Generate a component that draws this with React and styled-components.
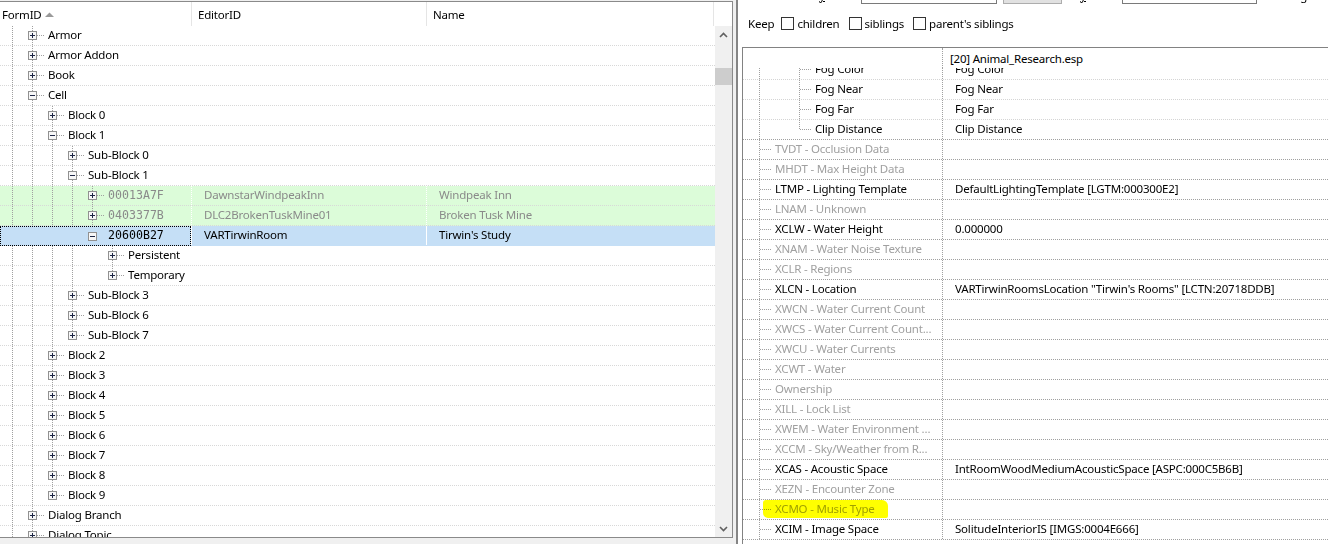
import React from 'react';
import styled, { createGlobalStyle, css } from 'styled-components';

const FONT = `"Noto Sans", "Open Sans", sans-serif`;
const MONO = `"DejaVu Sans Mono", "Liberation Mono", monospace`;
const TREE_LINE = '#a0a0a0';

const vDots = (c) => `repeating-linear-gradient(to bottom, ${c} 0 1px, transparent 1px 2px)`;
const hDots = (c) => `repeating-linear-gradient(to right, ${c} 0 1px, transparent 1px 2px)`;

const GlobalStyle = createGlobalStyle`
  html, body { margin: 0; padding: 0; }
  body {
    background: #f0f0f0;
    font-family: ${FONT};
    font-size: 11.5px;
    letter-spacing: -0.2px;
    color: #000;
    overflow: hidden;
  }
  #root { width: 1328px; height: 544px; }
`;

const Screen = styled.div`
  display: flex;
  width: 1328px;
  height: 544px;
  overflow: hidden;
`;

/* ---------- left grid ---------- */
const LeftPane = styled.section`
  flex: 0 0 733px;
  box-sizing: border-box;
  padding-top: 1px;
  background: #f0f0f0;
`;

const GridFrame = styled.div`
  height: 537px;
  box-sizing: border-box;
  background: #fff;
  border: 1px solid #8a8a8a;
  border-left: none;
  display: flex;
  flex-direction: column;
`;

const GridHead = styled.div`
  display: flex;
  flex: none;
  height: 24px;
`;

const HeadCell = styled.div`
  flex: ${(p) => (p.$w ? `0 0 ${p.$w}px` : '1 1 auto')};
  box-sizing: border-box;
  display: flex;
  align-items: center;
  gap: 3px;
  padding-left: ${(p) => p.$pad}px;
  white-space: nowrap;
  ${(p) => p.$divider && css`border-left: 1px solid #e5e5e5;`}
`;

const GridBody = styled.div`
  flex: 1;
  min-height: 0;
  display: flex;
`;

const RowsPane = styled.div`
  flex: 1;
  overflow: hidden;
`;

const tones = { plain: '#fff', green: '#dcfcd9', sel: '#c5dff6' };

const GridRow = styled.div`
  display: flex;
  height: 20px;
  box-sizing: border-box;
  border-bottom: 1px dotted ${(p) => (p.$tone === 'sel' ? 'transparent' : '#d8d8d8')};
  background: ${(p) => tones[p.$tone]};
  color: ${(p) => (p.$tone === 'green' ? '#8a8a8a' : '#000')};
`;

const KeyCell = styled.div`
  flex: 0 0 191px;
  box-sizing: border-box;
  display: flex;
  padding-left: 2px;
  overflow: hidden;
  ${(p) =>
    p.$focus &&
    css`
      height: 20px;
      outline: 1px dotted #000;
      outline-offset: -1px;
    `}
`;

const DataCell = styled.div`
  flex: ${(p) => (p.$w ? `0 0 ${p.$w}px` : '1 1 auto')};
  box-sizing: border-box;
  display: flex;
  align-items: center;
  padding: 0 0 2px 12px;
  white-space: nowrap;
  overflow: hidden;
  border-left: 1px ${(p) => (p.$tone === 'sel' ? 'solid' : 'dotted')} #fff;
`;

const NodeText = styled.span`
  align-self: center;
  margin-left: 4px;
  padding-bottom: 2px;
  white-space: nowrap;
  font-family: ${(p) => (p.$mono ? MONO : FONT)};
  font-size: ${(p) => (p.$mono ? '11.6px' : '11.5px')};
  letter-spacing: ${(p) => (p.$mono ? '0' : '-0.2px')};
`;

/* tree drawing */
const Guide = styled.span`
  flex: 0 0 20px;
  ${(p) =>
    p.$on &&
    css`
      background: ${vDots(p.$c)} 10px 0 / 1px 100% no-repeat;
    `}
`;

const Joint = styled.span`
  flex: 0 0 22px;
  box-sizing: border-box;
  display: flex;
  align-items: center;
  padding-left: 6px;
  background:
    ${(p) => hDots(p.$c)} 11px 9px / 11px 1px no-repeat,
    ${(p) => vDots(p.$c)} 10px 0 / 1px ${(p) => (p.$last ? '10px' : '100%')} no-repeat;
`;

const ExpanderSvg = styled.svg`
  display: block;
  flex: none;
`;

function Expander({ open }) {
  return (
    <ExpanderSvg width="9" height="9" viewBox="0 0 9 9">
      <rect x="0.5" y="0.5" width="8" height="8" fill="#f7f7f7" stroke="#919191" />
      <path d="M2 4.5h5" stroke="#1c2544" />
      {!open && <path d="M4.5 2v5" stroke="#1c2544" />}
    </ExpanderSvg>
  );
}

function Lead({ guides, last, btn, color = TREE_LINE }) {
  return (
    <>
      {guides.map((on, i) => (
        <Guide key={i} $on={on} $c={color} />
      ))}
      <Joint $last={last} $c={color}>
        {btn && <Expander open={btn === '-'} />}
      </Joint>
    </>
  );
}

/* scrollbar */
const VScroll = styled.div`
  flex: 0 0 17px;
  background: #f0f0f0;
  display: flex;
  flex-direction: column;
`;

const ScrollBtn = styled.div`
  flex: 0 0 17px;
  display: flex;
  align-items: center;
  justify-content: center;
`;

const Track = styled.div`
  flex: 1;
  padding-top: 25px;
`;

const Thumb = styled.div`
  height: 17px;
  background: #cdcdcd;
`;

function Chevron({ down }) {
  return (
    <svg width="9" height="6" viewBox="0 0 9 6">
      <polyline
        points={down ? '1,1 4.5,4.5 8,1' : '1,5 4.5,1.5 8,5'}
        fill="none"
        stroke="#606060"
        strokeWidth="1.6"
      />
    </svg>
  );
}

function SortArrow() {
  return (
    <svg width="9" height="5" viewBox="0 0 9 5">
      <polygon points="0,5 4.5,0.5 9,5" fill="#9a9a9a" />
    </svg>
  );
}

/* ---------- splitter ---------- */
const Splitter = styled.div`
  flex: 0 0 5px;
  box-sizing: border-box;
  background: #f0f0f0;
  border-right: 2px solid #858585;
`;

/* ---------- right side ---------- */
const RightPane = styled.section`
  flex: 1;
  min-width: 0;
  background: #fff;
  display: flex;
  flex-direction: column;
`;

const FilterBar = styled.div`
  flex: none;
  height: 24px;
  margin-top: -20px;
  padding-left: 67px;
  display: flex;
  align-items: flex-end;
`;

const BarLabel = styled.span`
  flex: 0 0 20px;
  margin-left: ${(p) => p.$ml || 0}px;
  display: flex;
  justify-content: flex-end;
  white-space: nowrap;
  line-height: 16px;
  u { text-decoration: underline; }
`;

const BarInput = styled.div`
  flex: 0 0 ${(p) => p.$w}px;
  margin-left: ${(p) => p.$ml}px;
  height: 22px;
  box-sizing: border-box;
  border: 1px solid #7a7a7a;
  background: #fff;
`;

const BarButton = styled.div`
  flex: 0 0 59px;
  margin-left: 6px;
  height: 22px;
  box-sizing: border-box;
  border: 1px solid #adadad;
  background: #e1e1e1;
`;

const KeepRow = styled.div`
  flex: none;
  height: 20px;
  margin-top: 9px;
  padding-left: 10px;
  display: flex;
  align-items: center;
  white-space: nowrap;
`;

const KeepLabel = styled.span`
  margin-right: 7px;
`;

const CheckBox = styled.span`
  flex: none;
  width: 13px;
  height: 13px;
  box-sizing: border-box;
  border: 1px solid #333;
  background: #fff;
  margin-right: 3px;
`;

const CheckText = styled.span`
  margin-right: 9px;
`;

const PropFrame = styled.div`
  flex: 1;
  min-height: 0;
  margin: 14px 0 0 4px;
  border-left: 1px solid #828282;
  border-top: 1px solid #828282;
  display: flex;
  flex-direction: column;
  overflow: hidden;
`;

const PropHead = styled.div`
  flex: none;
  height: 20px;
  display: flex;
  position: relative;
  z-index: 1;
  background: #fff;
`;

const PropHeadBlank = styled.div`
  flex: 0 0 199px;
`;

const PropHeadFile = styled.div`
  flex: 1;
  display: flex;
  align-items: center;
  padding-left: 7px;
  padding-top: 1px;
  border-left: 1px dotted #a0a0a0;
  white-space: nowrap;
`;

const PropBody = styled.div`
  flex: 1;
  overflow: hidden;
`;

const PropList = styled.div`
  margin-top: -8px;
`;

const PropRow = styled.div`
  display: flex;
  height: 20px;
  box-sizing: border-box;
  border-bottom: 1px dotted ${(p) => (p.$soft ? '#d4d4d4' : '#a0a0a0')};
`;

const PropName = styled.div`
  flex: 0 0 199px;
  box-sizing: border-box;
  display: flex;
  padding-left: 6px;
  overflow: hidden;
  position: relative;
  color: ${(p) => (p.$dim ? '#a0a0a0' : '#000')};
`;

const PropValue = styled.div`
  flex: 1;
  display: flex;
  align-items: center;
  padding: 0 0 2px 12px;
  border-left: 1px dotted #a0a0a0;
  white-space: nowrap;
  overflow: hidden;
`;

const Marker = styled.span`
  position: absolute;
  left: 20px;
  top: 0;
  width: 125px;
  height: 18px;
  background: #ffff00;
  mix-blend-mode: multiply;
  border-radius: 3px 6px 2px 5px;
  pointer-events: none;
`;

/* ---------- data ---------- */
const leftTree = [
  { text: 'Armor', btn: '+' },
  { text: 'Armor Addon', btn: '+' },
  { text: 'Book', btn: '+' },
  {
    text: 'Cell',
    btn: '-',
    children: [
      { text: 'Block 0', btn: '+' },
      {
        text: 'Block 1',
        btn: '-',
        children: [
          { text: 'Sub-Block 0', btn: '+' },
          {
            text: 'Sub-Block 1',
            btn: '-',
            children: [
              { text: '00013A7F', mono: true, tone: 'green', editor: 'DawnstarWindpeakInn', name: 'Windpeak Inn', btn: '+' },
              { text: '0403377B', mono: true, tone: 'green', editor: 'DLC2BrokenTuskMine01', name: 'Broken Tusk Mine', btn: '+' },
              {
                text: '20600B27',
                mono: true,
                tone: 'sel',
                editor: 'VARTirwinRoom',
                name: "Tirwin's Study",
                btn: '-',
                children: [
                  { text: 'Persistent', btn: '+' },
                  { text: 'Temporary', btn: '+' },
                ],
              },
            ],
          },
          { text: 'Sub-Block 3', btn: '+' },
          { text: 'Sub-Block 6', btn: '+' },
          { text: 'Sub-Block 7', btn: '+' },
        ],
      },
      ...[2, 3, 4, 5, 6, 7, 8, 9].map((n) => ({ text: `Block ${n}`, btn: '+' })),
    ],
  },
  { text: 'Dialog Branch', btn: '+' },
  { text: 'Dialog Topic', btn: '+', more: true },
];

function flatten(nodes, guides, out) {
  nodes.forEach((node, i) => {
    const last = i === nodes.length - 1 && !node.more;
    out.push({ ...node, guides, last });
    if (node.children) flatten(node.children, [...guides, !last], out);
  });
  return out;
}

const leftRows = flatten(leftTree, [true], []);

const FOG = [true, false];
const propRows = [
  { name: 'Fog Color', value: 'Fog Color', guides: FOG, soft: true },
  { name: 'Fog Near', value: 'Fog Near', guides: FOG, soft: true },
  { name: 'Fog Far', value: 'Fog Far', guides: FOG, soft: true },
  { name: 'Clip Distance', value: 'Clip Distance', guides: FOG, last: true },
  { name: 'TVDT - Occlusion Data', dim: true },
  { name: 'MHDT - Max Height Data', dim: true },
  { name: 'LTMP - Lighting Template', value: 'DefaultLightingTemplate [LGTM:000300E2]' },
  { name: 'LNAM - Unknown', dim: true },
  { name: 'XCLW - Water Height', value: '0.000000' },
  { name: 'XNAM - Water Noise Texture', dim: true },
  { name: 'XCLR - Regions', dim: true },
  { name: 'XLCN - Location', value: 'VARTirwinRoomsLocation "Tirwin\'s Rooms" [LCTN:20718DDB]' },
  { name: 'XWCN - Water Current Count', dim: true },
  { name: 'XWCS - Water Current Count...', dim: true },
  { name: 'XWCU - Water Currents', dim: true },
  { name: 'XCWT - Water', dim: true },
  { name: 'Ownership', dim: true },
  { name: 'XILL - Lock List', dim: true },
  { name: 'XWEM - Water Environment ...', dim: true },
  { name: 'XCCM - Sky/Weather from R...', dim: true },
  { name: 'XCAS - Acoustic Space', value: 'IntRoomWoodMediumAcousticSpace [ASPC:000C5B6B]' },
  { name: 'XEZN - Encounter Zone', dim: true },
  { name: 'XCMO - Music Type', dim: true, marked: true },
  { name: 'XCIM - Image Space', value: 'SolitudeInteriorIS [IMGS:0004E666]' },
];

export default function App() {
  return (
    <>
      <GlobalStyle />
      <Screen>
        <LeftPane>
          <GridFrame>
            <GridHead>
              <HeadCell $w={191} $pad={2}>
                FormID <SortArrow />
              </HeadCell>
              <HeadCell $w={235} $pad={6} $divider>
                EditorID
              </HeadCell>
              <HeadCell $w={287} $pad={6} $divider>
                Name
              </HeadCell>
              <HeadCell $pad={0} $divider />
            </GridHead>
            <GridBody>
              <RowsPane>
                {leftRows.map((r, i) => (
                  <GridRow key={i} $tone={r.tone || 'plain'}>
                    <KeyCell $focus={r.tone === 'sel'}>
                      {r.tone !== 'sel' ? (
                        <Lead guides={r.guides} last={r.last} btn={r.btn} />
                      ) : (
                        <>
                          {r.guides.map((_, k) => (
                            <Guide key={k} />
                          ))}
                          <Joint $c="transparent">
                            <Expander open />
                          </Joint>
                        </>
                      )}
                      <NodeText $mono={r.mono}>{r.text}</NodeText>
                    </KeyCell>
                    <DataCell $w={235} $tone={r.tone}>
                      {r.editor}
                    </DataCell>
                    <DataCell $tone={r.tone}>{r.name}</DataCell>
                  </GridRow>
                ))}
              </RowsPane>
              <VScroll>
                <ScrollBtn>
                  <Chevron />
                </ScrollBtn>
                <Track>
                  <Thumb />
                </Track>
                <ScrollBtn>
                  <Chevron down />
                </ScrollBtn>
              </VScroll>
            </GridBody>
          </GridFrame>
        </LeftPane>

        <Splitter />

        <RightPane>
          <FilterBar>
            <BarLabel>
              b<u>y</u>
            </BarLabel>
            <BarInput $w={136} $ml={36} />
            <BarButton />
            <BarLabel $ml={4}>
              b<u>y</u>
            </BarLabel>
            <BarInput $w={135} $ml={36} />
            <BarLabel $ml={30}>g</BarLabel>
          </FilterBar>

          <KeepRow>
            <KeepLabel>Keep</KeepLabel>
            <CheckBox />
            <CheckText>children</CheckText>
            <CheckBox />
            <CheckText>siblings</CheckText>
            <CheckBox />
            <CheckText>parent's siblings</CheckText>
          </KeepRow>

          <PropFrame>
            <PropHead>
              <PropHeadBlank />
              <PropHeadFile>[20] Animal_Research.esp</PropHeadFile>
            </PropHead>
            <PropBody>
              <PropList>
                {propRows.map((r, i) => (
                  <PropRow key={i} $soft={r.soft}>
                    <PropName $dim={r.dim}>
                      <Lead guides={r.guides || []} last={r.last} />
                      <NodeText>{r.name}</NodeText>
                      {r.marked && <Marker />}
                    </PropName>
                    <PropValue>{r.value}</PropValue>
                  </PropRow>
                ))}
              </PropList>
            </PropBody>
          </PropFrame>
        </RightPane>
      </Screen>
    </>
  );
}
